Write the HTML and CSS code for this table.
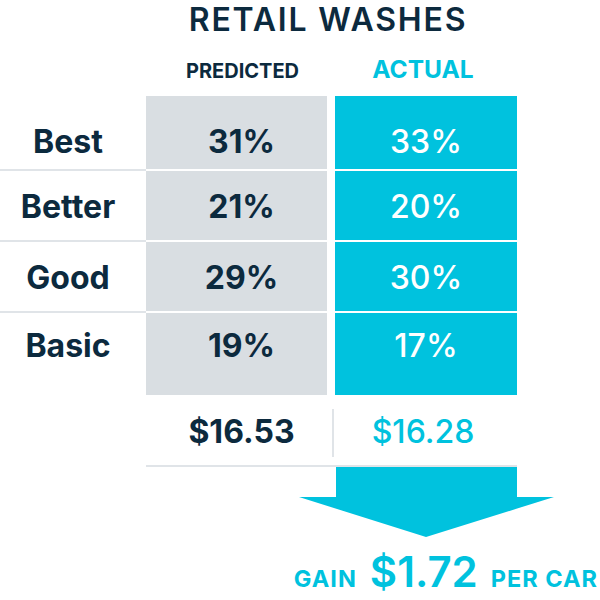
FILE: index.html
```html
<!DOCTYPE html>
<html lang="en">
<head>
  <meta charset="UTF-8">
  <title>Retail Washes</title>
  <link rel="stylesheet" href="styles.css">
</head>
<body>
  <div class="board">
    <h1 class="title">RETAIL WASHES</h1>

    <div class="grid">
      <div class="head-spacer"></div>
      <div class="head head-pred">PREDICTED</div>
      <div class="head head-act">ACTUAL</div>

      <div class="cell label first">Best</div>
      <div class="cell pred first">31%</div>
      <div class="cell act first">33%</div>

      <div class="cell label">Better</div>
      <div class="cell pred">21%</div>
      <div class="cell act">20%</div>

      <div class="cell label">Good</div>
      <div class="cell pred">29%</div>
      <div class="cell act">30%</div>

      <div class="cell label last">Basic</div>
      <div class="cell pred last">19%</div>
      <div class="cell act last">17%</div>
    </div>

    <div class="totals">
      <div class="total total-pred">$16.53</div>
      <div class="total-divider"></div>
      <div class="total total-act">$16.28</div>
    </div>

    <svg class="arrow" width="255" height="70" viewBox="0 0 255 70">
      <path d="M37 0 H218 V30 H255 L127 70 L0 30 H37 Z" fill="#00c2de"/>
    </svg>

    <div class="gain">
      <span class="gain-word">GAIN</span>
      <span class="gain-amount">$1.72</span>
      <span class="gain-word">PER CAR</span>
    </div>
  </div>
</body>
</html>
```

FILE: styles.css
```css
:root {
  --navy: #0c2a3e;
  --cyan: #00c2de;
  --gray: #d9dee2;
  --line: #e0e4e8;
}

* {
  margin: 0;
  padding: 0;
  box-sizing: border-box;
}

body {
  font-family: Inter, "Liberation Sans", sans-serif;
  background-color: white;
  color: var(--navy);
  width: 600px;
  height: 600px;
  overflow: hidden;
}

.board {
  padding-top: 4px;
}

.title {
  margin-left: 146px;
  width: 371px;
  padding-right: 7px;
  text-align: center;
  font-size: 32px;
  line-height: 32px;
  font-weight: 600;
  letter-spacing: 1.8px;
  margin-bottom: 14px;
}

.grid {
  display: grid;
  grid-template-columns: 146px 181px 190px;
}

.head {
  height: 46px;
  display: flex;
  align-items: flex-end;
  justify-content: center;
  padding-bottom: 15px;
  line-height: 1;
  font-weight: 700;
}

.head-pred {
  font-size: 20px;
  padding-left: 12px;
}

.head-act {
  font-size: 24.5px;
  color: var(--cyan);
  margin-left: 8px;
  padding-right: 6px;
}

.cell {
  height: 71px;
  padding-top: 20px;
  text-align: center;
  font-size: 32px;
  line-height: 32px;
  border-bottom: 2px solid white;
}

.cell.first {
  height: 75px;
  padding-top: 30px;
}

.cell.last {
  height: 82px;
  padding-top: 17px;
  border-bottom: none;
}

.label {
  font-weight: 700;
  border-bottom-color: var(--line);
  padding-right: 10px;
}

.pred {
  background-color: var(--gray);
  font-weight: 700;
  padding-left: 10px;
}

.act {
  background-color: var(--cyan);
  color: white;
  font-weight: 500;
  margin-left: 8px;
}

.totals {
  margin-left: 146px;
  width: 371px;
  height: 72px;
  display: grid;
  grid-template-columns: 181px 8px 182px;
  border-bottom: 2px solid var(--line);
}

.total {
  padding-top: 21px;
  text-align: center;
  font-size: 32px;
  line-height: 32px;
}

.total-pred {
  font-weight: 700;
  padding-left: 10px;
}

.total-act {
  color: var(--cyan);
  font-weight: 500;
  padding-right: 6px;
}

.total-divider {
  width: 1.5px;
  height: 48px;
  margin-top: 14px;
  margin-left: 5px;
  background-color: var(--line);
}

.arrow {
  display: block;
  margin-left: 299px;
}

.gain {
  display: flex;
  justify-content: flex-end;
  align-items: baseline;
  gap: 13px;
  padding-right: 2px;
  margin-top: 14px;
  color: var(--cyan);
  font-weight: 700;
  line-height: 1;
}

.gain-word {
  font-size: 23.5px;
  letter-spacing: 1px;
}

.gain-amount {
  font-size: 42px;
  font-weight: 600;
}
```
